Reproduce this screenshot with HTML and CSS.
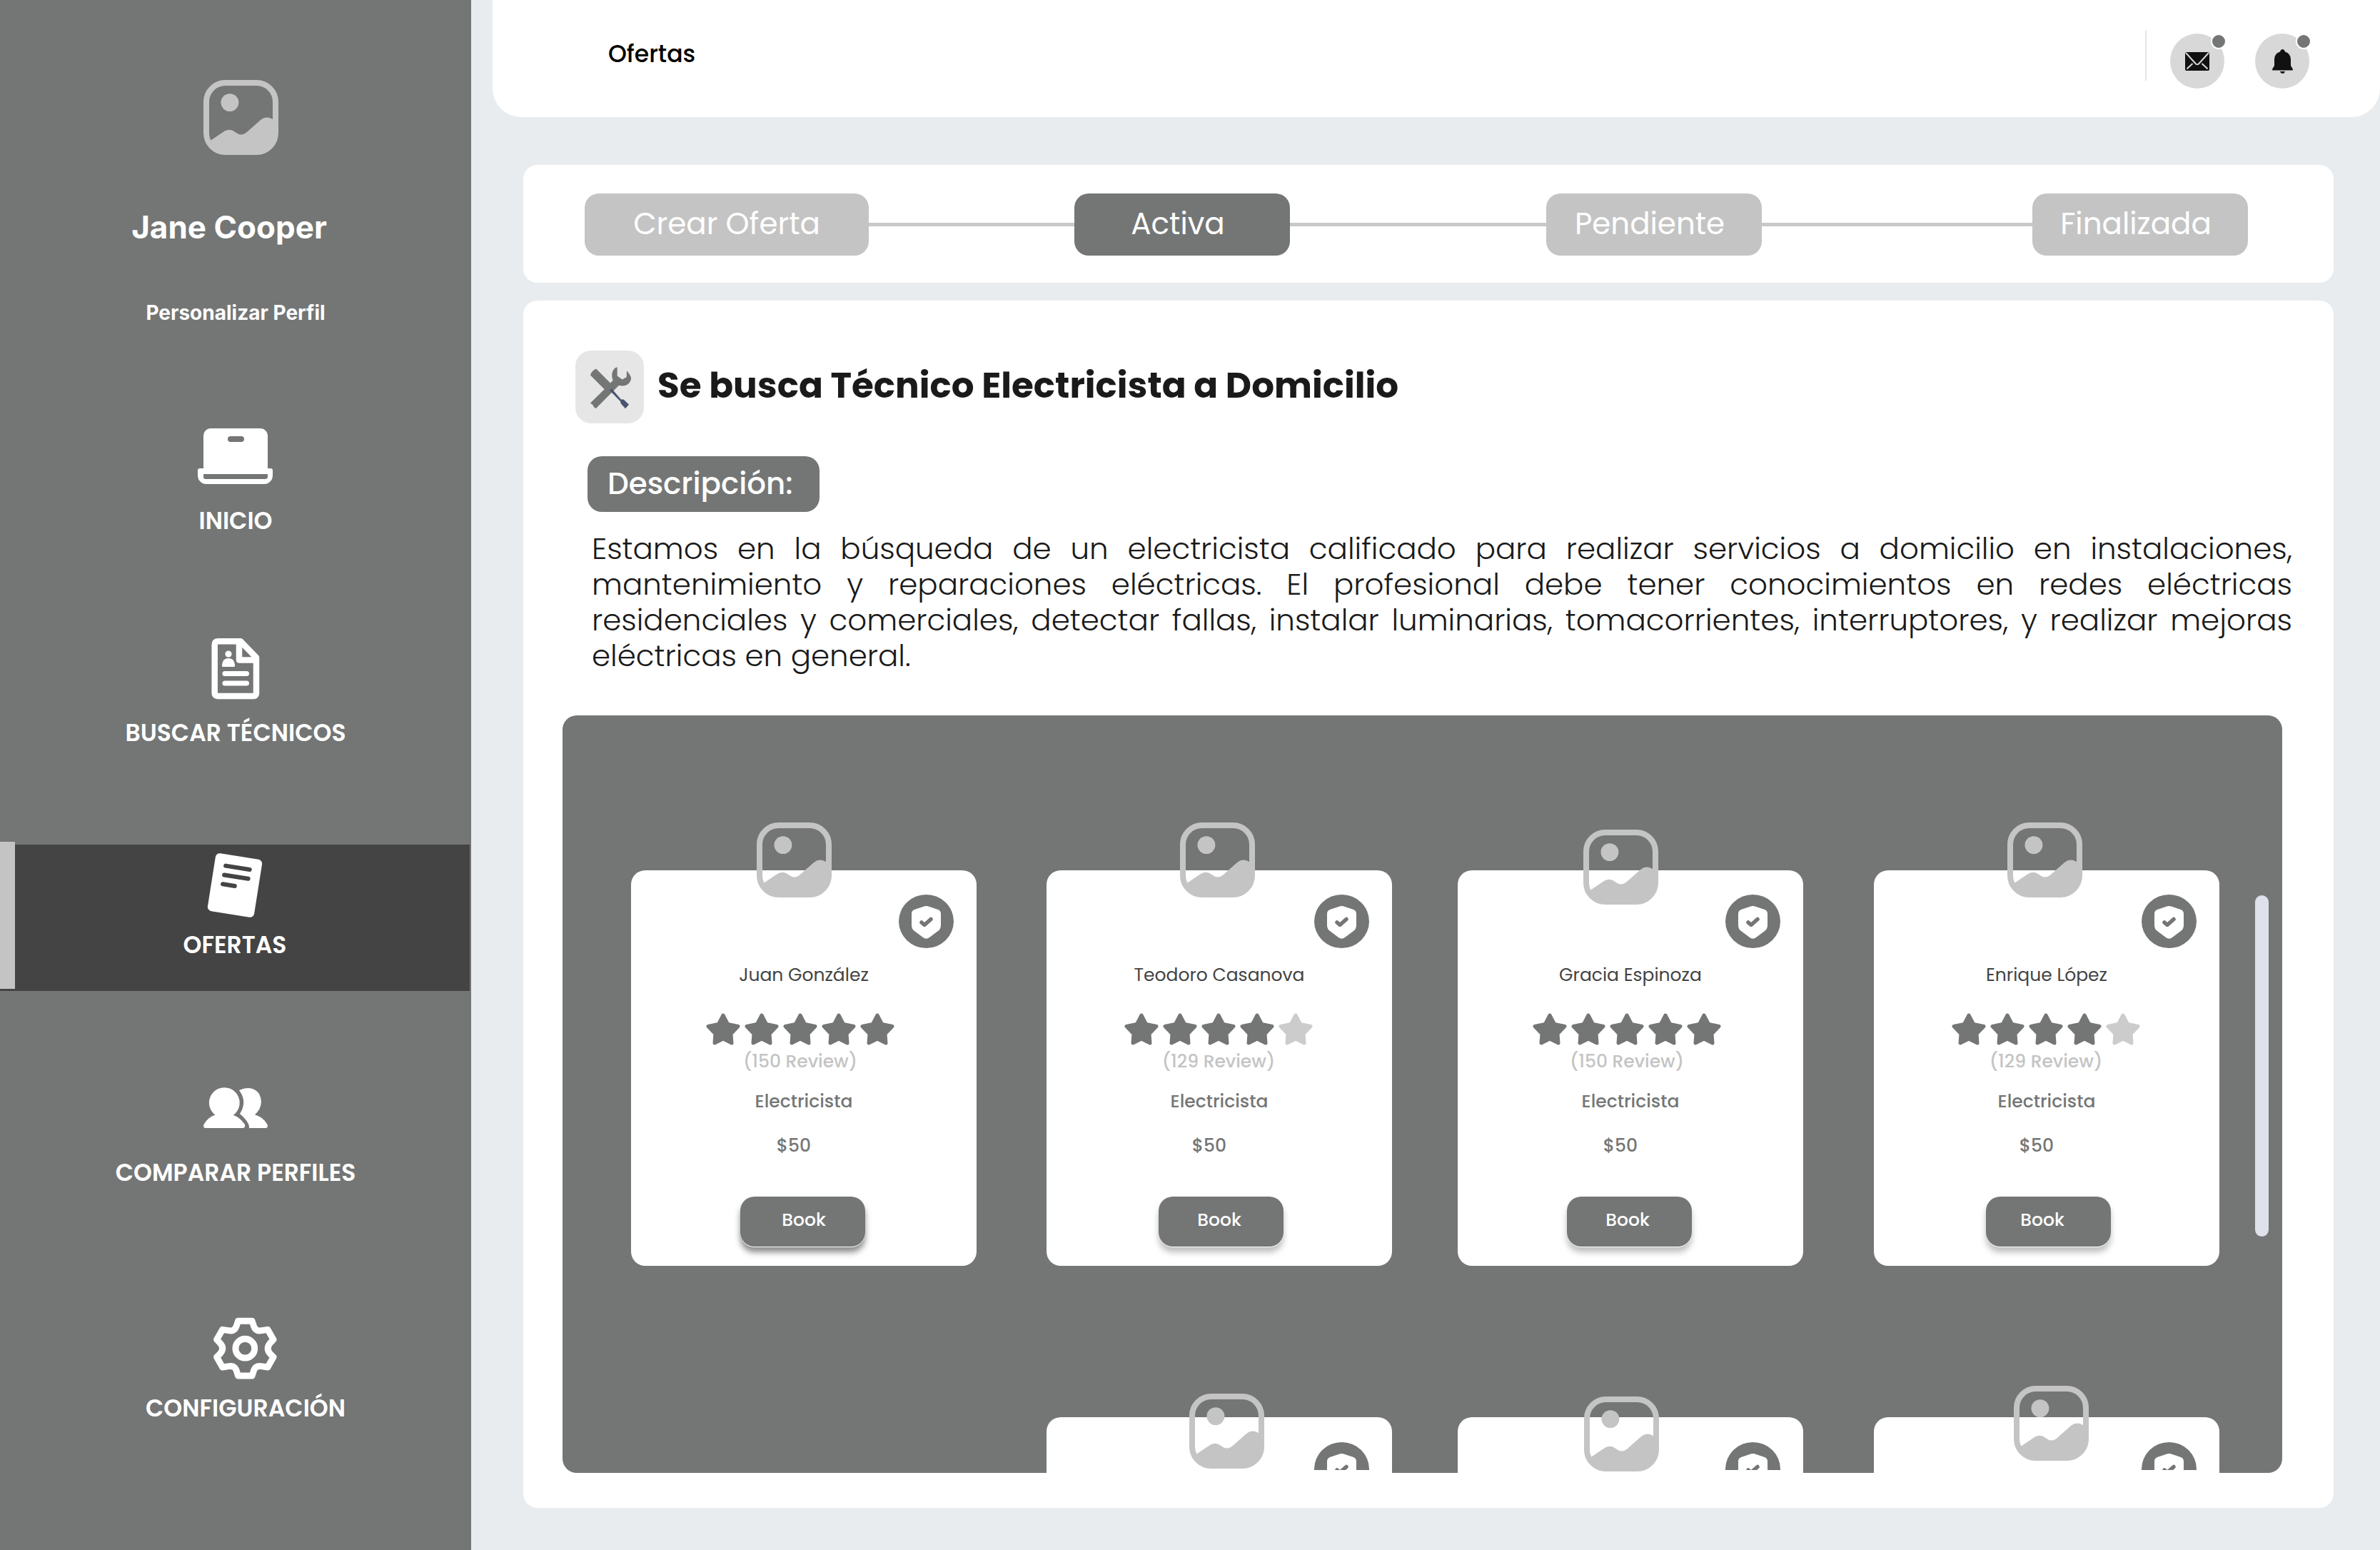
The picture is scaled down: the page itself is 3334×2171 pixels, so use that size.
FILE: index.html
```html
<!DOCTYPE html>
<html lang="es">
<head>
<meta charset="utf-8">
<meta name="viewport" content="width=device-width, initial-scale=1">
<title>Ofertas</title>
<link rel="stylesheet" href="styles.css">
</head>
<body>
<svg class="sprite" aria-hidden="true">
  <symbol id="picture" viewBox="638 116 236 236">
    <rect x="647" y="125" width="218" height="218" rx="60" fill="none" stroke="currentColor" stroke-width="18"/>
    <circle cx="721" cy="187" r="28" fill="currentColor"/>
    <path fill="currentColor" d="M658 308 698 281Q718 265 738 280 757 296 776 279L818 242Q838 226 860 243V290Q860 345 806 345H708Q660 345 658 308Z"/>
  </symbol>
  <symbol id="badge" viewBox="0 0 77 75">
    <ellipse cx="38.500" cy="37.500" rx="38.500" ry="37.500" fill="#747675"/>
    <path fill="#fff" d="M34 17Q38.500 15 43 17L55 21Q59 22.500 59 27V43Q59 48 55 51L43 60Q38.500 63.500 34 60L22 51Q18 48 18 43V27Q18 22.500 22 21Z"/>
    <path d="M32 39 36 42.500 45 34.500" fill="none" stroke="#747675" stroke-width="5.500" stroke-linecap="round" stroke-linejoin="round"/>
  </symbol>
  <symbol id="star" viewBox="0 0 48 45" overflow="visible">
    <path d="M24 3 30.500 15.500 45 18.500 35 29 36 42 24 36 12 42 13 29 3 18.500 17.500 15.500Z" fill="currentColor" stroke="currentColor" stroke-width="5" stroke-linejoin="round"/>
  </symbol>
</svg>

<div class="app">
  <aside class="sidebar">
    <svg class="avatar sidebar-avatar" aria-hidden="true"><use href="#picture"/></svg>
    <p class="user-name">Jane Cooper</p>
    <a class="user-link" href="#perfil">Personalizar Perfil</a>
    <nav class="menu">
      <a class="menu-item" href="#inicio">
        <svg class="menu-icon" viewBox="0 0 120 120" aria-hidden="true">
          <path fill="#fff" fill-rule="evenodd" d="M25 11H95A10 10 0 0 1 105 21V67H109Q112 67 112 70V77A12 12 0 0 1 100 89H19A12 12 0 0 1 7 77V70Q7 67 10 67H15V21A10 10 0 0 1 25 11ZM53 22A4 4 0 0 0 53 30H68A4 4 0 0 0 68 22ZM15 75V79Q15 82 18 82H101Q105 82 105 79V75Z"/>
        </svg>
        INICIO
      </a>
      <a class="menu-item" href="#tecnicos">
        <svg class="menu-icon" viewBox="0 0 120 120" aria-hidden="true">
          <path fill="none" stroke="#fff" stroke-width="8.500" stroke-linejoin="round" d="M35 12.300H67L89 35V85Q89 89 85 89H35Q30.700 89 30.700 85V17Q30.700 12.300 35 12.300ZM65 13V38.600H89"/>
          <circle cx="50" cy="30" r="4.600" fill="#fff"/>
          <path fill="#fff" d="M41 45Q42 36 50 36 58 36 59 45V47Q59 48 58 48H42Q41 48 41 47Z"/>
          <path stroke="#fff" stroke-width="7" stroke-linecap="round" d="M45 57.600H75.500M45 71H75.500"/>
        </svg>
        BUSCAR TÉCNICOS
      </a>
      <a class="menu-item menu-item-active" href="#ofertas" aria-current="page">
        <svg class="menu-icon" viewBox="0 0 120 120" aria-hidden="true">
          <g transform="translate(60 57) rotate(9)">
            <rect x="-33" y="-41" width="66" height="82" rx="6" fill="#fff"/>
            <path d="M-17-25H17M-17-12H17M-17 1H0" stroke="#444" stroke-width="6" stroke-linecap="round"/>
          </g>
        </svg>
        OFERTAS
      </a>
      <a class="menu-item menu-item-compare" href="#comparar">
        <svg class="menu-icon" viewBox="0 0 120 120" aria-hidden="true">
          <circle cx="44.300" cy="42.600" r="21.400" fill="#fff"/>
          <path fill="#fff" d="M32 59.600Q22 62 15.500 73 14 78 18 78H70Q74 78 73 73 66 63 56 59.600L44 55ZM65 25Q83 17 93 30 101 46 87 59.600 98 62 104.500 73 106 78 102 78H79Q80 70 66 58 77 41 65 25Z"/>
        </svg>
        COMPARAR PERFILES
      </a>
      <a class="menu-item menu-item-settings" href="#configuracion">
        <svg class="menu-icon" viewBox="636 818 269 269" aria-hidden="true">
          <g fill="none" stroke="#fff" stroke-width="20" stroke-linejoin="round">
            <path d="M747 859H791L797 877Q803 892 820 889L840 886 858 917 847 929Q834 945 847 961L858 972 840 1004 820 1001Q803 998 797 1012L791 1031H747L741 1012Q735 998 718 1001L698 1004 680 972 691 961Q705 945 691 929L680 917 698 886 718 889Q735 892 741 877Z"/>
            <circle cx="769" cy="945" r="30"/>
          </g>
        </svg>
        CONFIGURACIÓN
      </a>
    </nav>
  </aside>

  <div class="page">
    <header class="topbar">
      <h1 class="topbar-title">Ofertas</h1>
      <div class="topbar-actions">
        <button class="round-button" type="button" aria-label="Mensajes">
          <svg width="34" height="26" viewBox="0 0 34 26" aria-hidden="true">
            <rect width="34" height="26" rx="2" fill="#111"/>
            <path d="M1 1 15 16.500Q17 18 19 16.500L33 1M10.500 16 2.500 23.500M23.500 16 31.500 23.500" fill="none" stroke="#d8d8d8" stroke-width="2"/>
          </svg>
          <span class="dot"></span>
        </button>
        <button class="round-button" type="button" aria-label="Notificaciones">
          <svg width="29" height="34" viewBox="0 0 29 34" aria-hidden="true">
            <path fill="#111" d="M11 3.500Q12 0 14.500 0 17 0 18 3.500 26 6 26 14V23L29 28Q29 29.500 28 29.500H1Q0 29.500 0 28L3 23V14Q3 6 11 3.500ZM11 31H18Q17 34 14.500 34 12 34 11 31Z"/>
          </svg>
          <span class="dot"></span>
        </button>
      </div>
    </header>

    <main class="content">
      <nav class="steps" aria-label="Estado de la oferta">
        <button class="step step-wide" type="button">Crear Oferta</button>
        <span class="connector connector-short"></span>
        <button class="step step-current" type="button" aria-current="step">Activa</button>
        <span class="connector"></span>
        <button class="step" type="button">Pendiente</button>
        <span class="connector connector-long"></span>
        <button class="step" type="button">Finalizada</button>
      </nav>

      <section class="offer">
        <div class="offer-head">
          <span class="offer-icon">
            <svg width="96" height="102" viewBox="30 27 288 305" aria-hidden="true">
              <path fill="#747675" d="M93 130Q95 116 112 105L118 104 177 163 188 152C178 128 186 100 206 96V133L227 148 245 138 246 111C258 124 268 140 263 150 255 172 235 178 213 173L116 270 107 263 104 256 93 247 152 189Z"/>
              <path fill="#485470" d="M174 194 183 187 222 232 233 232 255 254 240 270 220 248V241Z"/>
            </svg>
          </span>
          <h2 class="offer-title">Se busca Técnico Electricista a Domicilio</h2>
        </div>
        <h3 class="offer-label">Descripción:</h3>
        <p class="offer-text">Estamos en la búsqueda de un electricista calificado para realizar servicios a domicilio en instalaciones, mantenimiento y reparaciones eléctricas. El profesional debe tener conocimientos en redes eléctricas residenciales y comerciales, detectar fallas, instalar luminarias, tomacorrientes, interruptores, y realizar mejoras eléctricas en general.</p>

        <div class="panel">
          <article class="card card-first">
            <svg class="avatar card-avatar" aria-hidden="true"><use href="#picture"/></svg>
            <svg class="badge" viewBox="0 0 77 75" role="img" aria-label="Verificado"><use href="#badge"/></svg>
            <h4 class="card-name">Juan González</h4>
            <div class="rating" role="img" aria-label="5 de 5">
              <svg class="star"><use href="#star"/></svg><svg class="star"><use href="#star"/></svg><svg class="star"><use href="#star"/></svg><svg class="star"><use href="#star"/></svg><svg class="star"><use href="#star"/></svg>
            </div>
            <p class="reviews">(150 Review)</p>
            <p class="trade">Electricista</p>
            <p class="price">$50</p>
            <button class="book" type="button">Book</button>
          </article>
          <article class="card">
            <svg class="avatar card-avatar card-avatar-right" aria-hidden="true"><use href="#picture"/></svg>
            <svg class="badge" viewBox="0 0 77 75" role="img" aria-label="Verificado"><use href="#badge"/></svg>
            <h4 class="card-name">Teodoro Casanova</h4>
            <div class="rating" role="img" aria-label="4 de 5">
              <svg class="star"><use href="#star"/></svg><svg class="star"><use href="#star"/></svg><svg class="star"><use href="#star"/></svg><svg class="star"><use href="#star"/></svg><svg class="star star-off"><use href="#star"/></svg>
            </div>
            <p class="reviews">(129 Review)</p>
            <p class="trade">Electricista</p>
            <p class="price">$50</p>
            <button class="book" type="button">Book</button>
          </article>
          <article class="card">
            <svg class="avatar card-avatar card-avatar-low" aria-hidden="true"><use href="#picture"/></svg>
            <svg class="badge" viewBox="0 0 77 75" role="img" aria-label="Verificado"><use href="#badge"/></svg>
            <h4 class="card-name">Gracia Espinoza</h4>
            <div class="rating" role="img" aria-label="5 de 5">
              <svg class="star"><use href="#star"/></svg><svg class="star"><use href="#star"/></svg><svg class="star"><use href="#star"/></svg><svg class="star"><use href="#star"/></svg><svg class="star"><use href="#star"/></svg>
            </div>
            <p class="reviews">(150 Review)</p>
            <p class="trade">Electricista</p>
            <p class="price">$50</p>
            <button class="book" type="button">Book</button>
          </article>
          <article class="card">
            <svg class="avatar card-avatar card-avatar-right" aria-hidden="true"><use href="#picture"/></svg>
            <svg class="badge" viewBox="0 0 77 75" role="img" aria-label="Verificado"><use href="#badge"/></svg>
            <h4 class="card-name">Enrique López</h4>
            <div class="rating" role="img" aria-label="4 de 5">
              <svg class="star"><use href="#star"/></svg><svg class="star"><use href="#star"/></svg><svg class="star"><use href="#star"/></svg><svg class="star"><use href="#star"/></svg><svg class="star star-off"><use href="#star"/></svg>
            </div>
            <p class="reviews">(129 Review)</p>
            <p class="trade">Electricista</p>
            <p class="price">$50</p>
            <button class="book book-tight" type="button">Book</button>
          </article>

          <article class="card card-peek card-peek-first">
            <svg class="avatar peek-avatar peek-avatar-a" aria-hidden="true"><use href="#picture"/></svg>
            <svg class="badge badge-cut" viewBox="0 0 77 39" aria-hidden="true"><use href="#badge" width="77" height="75"/></svg>
          </article>
          <article class="card card-peek">
            <svg class="avatar peek-avatar peek-avatar-b" aria-hidden="true"><use href="#picture"/></svg>
            <svg class="badge badge-cut" viewBox="0 0 77 39" aria-hidden="true"><use href="#badge" width="77" height="75"/></svg>
          </article>
          <article class="card card-peek">
            <svg class="avatar peek-avatar peek-avatar-c" aria-hidden="true"><use href="#picture"/></svg>
            <svg class="badge badge-cut" viewBox="0 0 77 39" aria-hidden="true"><use href="#badge" width="77" height="75"/></svg>
          </article>
          <span class="scroll-thumb"></span>
        </div>
      </section>
    </main>
  </div>
</div>
</body>
</html>
```
FILE: styles.css
```css
:root {
  --gray: #747675;
  --light: #c4c4c4;
  --dark: #444;
  --page: #e8ecef;
}

* { box-sizing: border-box; }

body {
  margin: 0;
  background: var(--page);
  color: #1a1a1a;
  font-family: Poppins, Inter, sans-serif;
}

h1, h2, h3, h4, p { margin: 0; }
a { color: inherit; text-decoration: none; }
button { border: 0; padding: 0; font-family: inherit; cursor: pointer; }
svg { display: block; }

.sprite { position: absolute; width: 0; height: 0; overflow: hidden; }

.app {
  display: grid;
  grid-template-columns: 660px minmax(0, 1fr);
  min-height: 100vh;
}

.avatar { width: 105px; height: 105px; color: var(--light); }

/* Sidebar */
.sidebar {
  display: flex;
  flex-direction: column;
  align-items: center;
  padding-top: 112px;
  background: var(--gray);
  color: #fff;
  font-family: Inter, sans-serif;
  font-weight: 700;
}
.sidebar-avatar { margin-left: 15px; }
.user-name { margin-top: 74px; margin-right: 18px; font-size: 44px; line-height: 54px; }
.user-link { margin-top: 76px; font-size: 28px; line-height: 34px; }

.menu {
  display: flex;
  flex-direction: column;
  gap: 92px;
  align-self: stretch;
  margin-top: 134px;
  font-family: Poppins, Inter, sans-serif;
}
.menu-item {
  position: relative;
  display: flex;
  flex-direction: column;
  align-items: center;
  height: 205px;
  font-size: 33px;
  line-height: 42px;
  font-weight: 600;
}
.menu-icon { width: 120px; height: 120px; }
.menu-item-active { background: var(--dark); margin-right: 2px; }
.menu-item-active::before {
  content: "";
  position: absolute;
  left: 0;
  top: -4px;
  width: 21px;
  height: 206px;
  background: var(--light);
}
.menu-item-compare { margin-top: 22px; }
.menu-item-settings { margin-top: 33px; padding-left: 28px; }

/* Top bar */
.page { display: flex; flex-direction: column; min-width: 0; }
.topbar {
  display: flex;
  justify-content: space-between;
  align-items: flex-start;
  height: 164px;
  margin-left: 30px;
  padding: 43px 99px 0 162px;
  background: #fff;
  border-radius: 0 0 40px 40px;
}
.topbar-title { margin-top: 12px; font-size: 33px; line-height: 42px; font-weight: 500; color: #000; }
.topbar-actions {
  display: flex;
  gap: 43px;
  height: 70px;
  padding: 4px 0 0 33px;
  border-left: 2px solid #e2e2ea;
}
.round-button {
  position: relative;
  display: flex;
  align-items: center;
  justify-content: center;
  width: 76px;
  height: 77px;
  border-radius: 50%;
  background: #d8d8d8;
}
.dot {
  position: absolute;
  top: 0;
  right: -3px;
  width: 22px;
  height: 22px;
  border: 2px solid #fff;
  border-radius: 50%;
  background: var(--gray);
}

/* Offer state */
.content {
  display: flex;
  flex-direction: column;
  gap: 25px;
  padding: 67px 65px 59px 73px;
}
.steps {
  display: flex;
  align-items: center;
  height: 165px;
  padding: 1px 120px 0 86px;
  background: #fff;
  border-radius: 20px;
}
.step {
  width: 302px;
  height: 87px;
  padding-right: 12px;
  border-radius: 20px;
  background: var(--light);
  color: #fff;
  font-size: 42px;
  line-height: 50px;
}
.step-wide { width: 398px; padding-right: 0; }
.step-current { background: var(--gray); }
.connector { flex: 359; height: 5px; background: #c9c9c9; }
.connector-short { flex-grow: 288; }
.connector-long { flex-grow: 379; }

/* Offer */
.offer {
  padding: 70px 72px 49px 55px;
  background: #fff;
  border-radius: 20px;
}
.offer-head { display: flex; align-items: center; gap: 19px; margin-left: 18px; }
.offer-icon { border-radius: 22px; background: #e6e6e6; }
.offer-title { padding-bottom: 4px; font-size: 50px; line-height: 60px; font-weight: 700; }
.offer-label {
  width: fit-content;
  margin: 46px 0 0 35px;
  padding: 14px 37px 14px 28px;
  border-radius: 20px;
  background: var(--gray);
  color: #fff;
  font-size: 42px;
  line-height: 50px;
  font-weight: 500;
}
.offer-text {
  margin: 27px -14px 58px 41px;
  font-size: 42px;
  line-height: 50px;
  font-weight: 300;
  text-align: justify;
}

/* Technicians */
.panel {
  position: relative;
  display: grid;
  grid-template-columns: minmax(0, 582fr) minmax(0, 576fr) minmax(0, 583fr) minmax(0, 484fr);
  row-gap: 212px;
  padding: 217px 88px 0 96px;
  border-radius: 20px;
  background: var(--gray);
}
.card {
  position: relative;
  display: flex;
  flex-direction: column;
  align-items: center;
  width: 484px;
  padding: 128px 0 27px;
  border-radius: 20px;
  background: #fff;
  color: var(--gray);
  font-size: 25px;
  line-height: 38px;
  font-weight: 500;
}
.card-avatar { position: absolute; top: -67px; left: 176px; }
.card-avatar-right { left: 187px; }
.card-avatar-low { top: -57px; }
.badge { position: absolute; top: 34px; right: 32px; width: 77px; height: 75px; }
.card-name { color: var(--dark); font-size: 25px; font-weight: 400; }
.rating { display: flex; gap: 6px; margin-top: 34px; }
.star { width: 48px; height: 45px; }
.star-off { color: #ccc; }
.reviews { margin-top: 4px; color: var(--light); }
.card .rating,
.card .reviews { margin-right: 2px; }
.card:nth-child(odd) .rating,
.card:nth-child(odd) .reviews { margin-right: 10px; }
.trade { margin-top: 18px; }
.price { margin: 24px 28px 0 0; }
.book {
  width: 175px;
  height: 70px;
  margin: 52px 0 0 4px;
  padding: 0 4px 5px 0;
  border-radius: 20px;
  background: var(--gray);
  box-shadow: 0 1px 0 #fff, 0 8px 8px rgba(0, 0, 0, .25);
  color: #fff;
  font-size: 25px;
  font-weight: 500;
}
.card:nth-child(odd) .book { margin: 52px 4px 0 0; }
.book-tight { padding-right: 16px; }
.card-first .book {
  padding: 0 0 5px 4px;
  box-shadow: 0 1px 0 #fff, 0 8px 8px rgba(0, 0, 0, .45);
}

.card-peek { height: 78px; padding: 0; border-radius: 20px 20px 0 0; }
.card-peek-first { grid-column: 2; }
.badge-cut { top: 35px; height: 39px; }
.peek-avatar { position: absolute; }
.peek-avatar-a { top: -33px; left: 200px; }
.peek-avatar-b { top: -29px; left: 177px; }
.peek-avatar-c { top: -44px; left: 196px; }

.scroll-thumb {
  position: absolute;
  top: 252px;
  right: 19px;
  width: 19px;
  height: 478px;
  border-radius: 10px;
  background: #dfe1eb;
}
```
